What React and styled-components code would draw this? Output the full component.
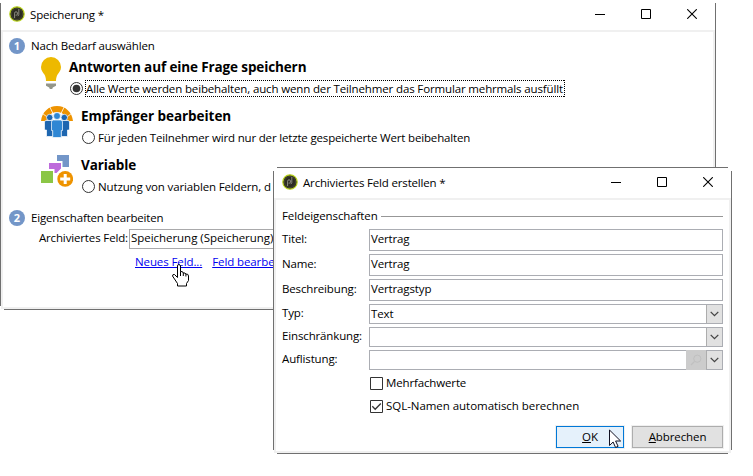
import React from 'react';
import styled, { createGlobalStyle, css } from 'styled-components';

const GlobalStyle = createGlobalStyle`
  * { box-sizing: border-box; }
  body {
    margin: 0;
    background: #fff;
    color: #000;
    font-family: "Open Sans", "Noto Sans", sans-serif;
    font-size: 11.5px;
    line-height: 17px;
    letter-spacing: -0.14px;
    overflow: hidden;
  }
`;

const Desktop = styled.main`
  position: relative;
  width: 753px;
  height: 476px;
  overflow: hidden;
`;

const WindowFrame = styled.section`
  position: absolute;
  left: ${(p) => p.$x}px;
  top: ${(p) => p.$y}px;
  width: ${(p) => p.$w}px;
  height: ${(p) => p.$h}px;
  padding: 1px;
  display: flex;
  flex-direction: column;

  &::before,
  &::after {
    content: '';
    position: absolute;
    pointer-events: none;
  }
  &::before {
    inset: 0 4px;
    border: solid #707070;
    border-width: 1px 0;
  }
  &::after {
    inset: 4px 0;
    border: solid #707070;
    border-width: 0 1px;
  }
`;

const TitleBar = styled.header`
  flex: none;
  height: 30px;
  display: flex;
  align-items: center;
  padding: 0 0 2px 8px;
  background: #fff;
`;

const TitleText = styled.h1`
  flex: 1;
  margin: 0 0 0 5px;
  padding-top: 1px;
  font-size: inherit;
  font-weight: 400;
  letter-spacing: -0.17px;
  white-space: pre;
`;

const CaptionButton = styled.button`
  width: 46px;
  height: 28px;
  padding: 0;
  border: 0;
  background: none;
  display: grid;
  place-items: center;
`;

const WindowBody = styled.div`
  flex: 1;
  min-height: 0;
  border: 2px solid #f0f0f0;
  background: #fff;
  padding: ${(p) => p.$pad};
  display: flex;
  flex-direction: column;
`;

const StepHeading = styled.h2`
  margin: 0;
  height: 17px;
  display: flex;
  align-items: center;
  gap: 6px;
  font-size: inherit;
  font-weight: 400;
  letter-spacing: -0.17px;
  white-space: nowrap;
`;

const OptionList = styled.div`
  margin: 3px 0 5px 32px;
`;

const Option = styled.div`
  height: 49px;
  display: flex;
  align-items: flex-start;
  gap: 8px;
`;

const OptionHeadline = styled.h3`
  margin: 0;
  height: 20px;
  line-height: 20px;
  font-size: 13.5px;
  font-weight: 700;
  letter-spacing: ${(p) => p.$track || '-0.12px'};
  white-space: nowrap;
`;

const RadioRow = styled.label`
  height: 23px;
  display: flex;
  align-items: center;
  gap: 2px;
  padding-left: 1px;
`;

const RadioText = styled.span`
  padding: 0 1px;
  letter-spacing: ${(p) => p.$track || '-0.17px'};
  white-space: nowrap;
  position: relative;
  ${(p) =>
    p.$focused &&
    css`
      width: 480px;
      height: 17px;
      line-height: 17px;

      &::after {
        content: '';
        position: absolute;
        inset: 0;
        --h: repeating-linear-gradient(90deg, #000 0 1px, transparent 1px 2px);
        --v: repeating-linear-gradient(0deg, #000 0 1px, transparent 1px 2px);
        background:
          var(--h) top / 100% 1px no-repeat,
          var(--h) bottom / 100% 1px no-repeat,
          var(--v) left / 1px 100% no-repeat,
          var(--v) right / 1px 100% no-repeat;
      }
    `}
`;

const ArchiveRow = styled.div`
  display: flex;
  margin: 3px 8px 0 0;
`;

const ArchiveLabel = styled.label`
  width: 120px;
  padding-right: 1px;
  text-align: right;
  letter-spacing: -0.14px;
`;

const ArchiveField = styled.div`
  flex: 1;
  height: 20px;
  border: 1px solid #a9a9ab;
  padding-left: 1px;
  line-height: 16px;
  letter-spacing: -0.04px;
`;

const LinkRow = styled.nav`
  display: flex;
  gap: 10px;
  margin: 4px 0 0 126px;
`;

const TextLink = styled.a`
  color: #0000f0;
  text-decoration: underline;
  text-underline-offset: 1px;
  letter-spacing: -0.1px;
  white-space: nowrap;
`;

const GroupTitle = styled.h2`
  margin: 0;
  display: flex;
  align-items: center;
  gap: 3px;
  height: 17px;
  font-size: inherit;
  font-weight: 400;
  letter-spacing: -0.1px;

  &::after {
    content: '';
    flex: 1;
    height: 1px;
    margin-top: 1px;
    background: #979797;
  }
`;

const Form = styled.div`
  margin-top: 5px;
  display: flex;
  flex-direction: column;
`;

const FormRow = styled.div`
  display: flex;
  height: ${(p) => (p.$combo ? 20 : 22)}px;
  margin-bottom: 3px;
`;

const FormLabel = styled.label`
  width: 87px;
  line-height: ${(p) => (p.$combo ? 17 : 19)}px;
  white-space: nowrap;
`;

const FormField = styled.div`
  flex: 1;
  display: flex;
  border: 1px solid #abadb3;
  line-height: 17px;
`;

const FieldValue = styled.span`
  flex: 1;
  padding-left: 1px;
`;

const DropButton = styled.button`
  width: 16px;
  padding: 0;
  border: 0;
  border-left: 1px solid #adadad;
  background: #e1e1e1;
  display: grid;
  place-items: center;
`;

const LookupButton = styled.button`
  width: 20px;
  height: 20px;
  margin: -1px 0;
  padding: 0;
  border: 0;
  background: #ccc;
  display: grid;
  place-items: center;
`;

const CheckRow = styled.label`
  display: flex;
  align-items: center;
  gap: 3px;
  height: 17px;
  margin: ${(p) => p.$top}px 0 0 88px;
  letter-spacing: ${(p) => p.$track};
  white-space: nowrap;

  svg {
    margin-top: 1px;
  }
`;

const Footer = styled.footer`
  margin-top: auto;
  display: flex;
  justify-content: flex-end;
  gap: 8px;
`;

const PushButton = styled.button`
  width: ${(p) => p.$w}px;
  height: 22px;
  padding: 0 0 1px;
  font: inherit;
  line-height: 19px;
  letter-spacing: -0.1px;
  color: #000;
  border: 1px solid ${(p) => (p.$primary ? '#0078d7' : '#adadad')};
  background: ${(p) => (p.$primary ? '#e5f1fb' : '#e1e1e1')};
  box-shadow: 0 0 0 1px #f0f0f0;

  u {
    text-underline-offset: 1px;
  }
`;

const Pointer = styled.svg`
  position: absolute;
  left: ${(p) => p.$x}px;
  top: ${(p) => p.$y}px;
`;

const AppIcon = () => (
  <svg width="16" height="16" viewBox="0 0 16 16">
    <circle cx="8" cy="8" r="7.2" fill="#2b2b22" stroke="#b9d31c" strokeWidth="1.2" />
    <circle cx="8" cy="8" r="5.6" fill="none" stroke="#45452f" />
    <path d="M5.6 12V7.2q0-1.400 1.400-1.400h.2q1.200 0 1.200 1.200v1.200q0 1-1.200 1H6.600M9.800 3v5.600q0 1.200-1.200 1.200" fill="none" stroke="#96968a" strokeWidth=".9" />
  </svg>
);

const Caption = ({ kind }) => (
  <CaptionButton aria-label={kind}>
    <svg width="10" height="10" viewBox="0 0 10 10" fill="none" stroke="#000">
      {kind === 'minimize' && <path d="M0 5.5h10" />}
      {kind === 'maximize' && <path d="M.5.5h9v9h-9z" />}
      {kind === 'close' && <path d="M.2.2l9.6 9.6M9.8.2L.2 9.8" strokeWidth="1.1" />}
    </svg>
  </CaptionButton>
);

const AppWindow = ({ title, pad, children, ...box }) => (
  <WindowFrame {...box}>
    <TitleBar>
      <AppIcon />
      <TitleText>{title}</TitleText>
      <Caption kind="minimize" />
      <Caption kind="maximize" />
      <Caption kind="close" />
    </TitleBar>
    <WindowBody $pad={pad}>{children}</WindowBody>
  </WindowFrame>
);

const Badge = styled.span`
  width: 16px;
  height: 16px;
  border-radius: 50%;
  background: #7396c8;
  color: #fff;
  font-size: 11px;
  font-weight: 700;
  line-height: 16px;
  text-align: center;
  letter-spacing: 0;
`;

const BulbIcon = () => (
  <svg width="20" height="33" viewBox="0 0 20 33">
    <path d="M10 0a10 10 0 0 1 10 10c0 3.6-2 5.400-3.400 7.600C15.600 19.300 15 21.500 15 24H5c0-2.500-.6-4.700-1.600-6.400C2 15.400 0 13.600 0 10A10 10 0 0 1 10 0z" fill="#edb900" />
    <path d="M5 26.600h10v2.200l-3.200 1.600-.6 1.600H8.800l-.6-1.600L5 28.800z" fill="#94968b" />
  </svg>
);

const PeopleIcon = () => (
  <svg width="32" height="32" viewBox="0 0 32 32">
    <path d="M0 15C1 6 7.500 0 16 0s15 6 16 15h-5.500c-1-5.500-5-9-10.500-9S6.500 9.500 5.500 15z" fill="#ee9300" />
    <path d="M8.600.5l3.400 7M23.400.5l-3.400 7M1.500 7.500l6 4.500M30.500 7.500l-6 4.500" stroke="#fff" strokeWidth=".8" />
    <g fill="#1e66b0" stroke="#fff" strokeWidth=".7">
      <circle cx="8.700" cy="11.500" r="3.200" />
      <circle cx="23.300" cy="11.500" r="3.200" />
      <path d="M3.500 16q0-1.500 1.500-1.500h7v16H5.500V24h-2zM28.500 16q0-1.500-1.500-1.500h-7v16h6.500V24h2z" />
    </g>
    <g fill="#2f87d4" stroke="#fff" strokeWidth=".7">
      <path d="M10.500 16q0-2 2-2h7q2 0 2 2v8.500H20.300v7h-8.600v-7h-1.200z" />
      <circle cx="16" cy="10" r="3.500" />
    </g>
  </svg>
);

const VariableIcon = () => (
  <svg width="32" height="32" viewBox="0 0 32 32">
    <path d="M16 0h12v12h-6.500V6H16z" fill="#7396c8" />
    <path d="M8 8h12v5.500l-4.500 4.500h-2v-4H8z" fill="#bd6bdc" />
    <path d="M0 16h12v12H0z" fill="#8bc646" />
    <circle cx="24.200" cy="23.900" r="8.500" fill="#fff" />
    <circle cx="24.200" cy="23.900" r="7.900" fill="#ee9300" />
    <path d="M24.200 18.900v10M19.200 23.900h10" stroke="#fff" strokeWidth="3" />
  </svg>
);

const Radio = ({ checked }) => (
  <svg width="13" height="13" viewBox="0 0 13 13">
    <circle cx="6.500" cy="6.500" r="6" fill="#fff" stroke="#333" />
    {checked && <circle cx="6.500" cy="6.500" r="3.800" fill="#333" />}
  </svg>
);

const Checkbox = ({ checked }) => (
  <svg width="13" height="13" viewBox="0 0 13 13" fill="none" stroke="#333">
    <path d="M.5.500h12v12H.5z" />
    {checked && <path d="M2.300 6.300l2.900 3 5.600-5.800" strokeWidth="1.300" />}
  </svg>
);

const Drop = () => (
  <DropButton aria-label="open">
    <svg width="9" height="6" viewBox="0 0 9 6" fill="none" stroke="#444" strokeWidth="1.300">
      <path d="M.7.900l3.800 3.800L8.300.900" />
    </svg>
  </DropButton>
);

const Lookup = () => (
  <LookupButton aria-label="lookup">
    <svg width="12" height="12" viewBox="0 0 12 12" fill="none" stroke="#c0c0c0">
      <circle cx="7.300" cy="4.700" r="3.600" />
      <path d="M4.600 7.400L1 11" strokeWidth="1.300" />
    </svg>
  </LookupButton>
);

const OptionItem = ({ icon, headline, track, text, textTrack, checked }) => (
  <Option>
    {icon}
    <div>
      <OptionHeadline $track={track}>{headline}</OptionHeadline>
      <RadioRow>
        <Radio checked={checked} />
        <RadioText $focused={checked} $track={textTrack}>{text}</RadioText>
      </RadioRow>
    </div>
  </Option>
);

const Field = ({ label, value, combo, lookup }) => (
  <FormRow $combo={combo}>
    <FormLabel $combo={combo}>{label}</FormLabel>
    <FormField>
      <FieldValue>{value}</FieldValue>
      {lookup && <Lookup />}
      {combo && <Drop />}
    </FormField>
  </FormRow>
);

export default function App() {
  return (
    <Desktop>
      <GlobalStyle />
      <AppWindow title="Speicherung *" pad="5px 0 0 6px" $x={0} $y={-1} $w={716} $h={311}>
        <StepHeading><Badge>1</Badge>Nach Bedarf auswählen</StepHeading>
        <OptionList>
          <OptionItem
            icon={<BulbIcon />}
            headline="Antworten auf eine Frage speichern"
            text="Alle Werte werden beibehalten, auch wenn der Teilnehmer das Formular mehrmals ausfüllt"
            textTrack="-0.14px"
            checked
          />
          <OptionItem
            icon={<PeopleIcon />}
            headline="Empfänger bearbeiten"
            track="-0.04px"
            text="Für jeden Teilnehmer wird nur der letzte gespeicherte Wert beibehalten"
          />
          <OptionItem
            icon={<VariableIcon />}
            headline="Variable"
            text="Nutzung von variablen Feldern, d"
            textTrack="-0.14px"
          />
        </OptionList>
        <StepHeading><Badge>2</Badge>Eigenschaften bearbeiten</StepHeading>
        <ArchiveRow>
          <ArchiveLabel>Archiviertes Feld:</ArchiveLabel>
          <ArchiveField>Speicherung (Speicherung)</ArchiveField>
        </ArchiveRow>
        <LinkRow>
          <TextLink>Neues Feld...</TextLink>
          <TextLink>Feld bearbe</TextLink>
        </LinkRow>
      </AppWindow>
      <AppWindow title="Archiviertes Feld erstellen *" pad="7px 6px 3px 6px" $x={273} $y={167} $w={459} $h={287}>
        <GroupTitle>Feldeigenschaften</GroupTitle>
        <Form>
          <Field label="Titel:" value="Vertrag" />
          <Field label="Name:" value="Vertrag" />
          <Field label="Beschreibung:" value="Vertragstyp" />
          <Field label="Typ:" value="Text" combo />
          <Field label="Einschränkung:" combo />
          <Field label="Auflistung:" combo lookup />
        </Form>
        <CheckRow $top={1} $track="-0.14px"><Checkbox />Mehrfachwerte</CheckRow>
        <CheckRow $top={6} $track="-0.04px"><Checkbox checked />SQL-Namen automatisch berechnen</CheckRow>
        <Footer>
          <PushButton $w={68} $primary><u>O</u>K</PushButton>
          <PushButton $w={91}><u>A</u>bbrechen</PushButton>
        </Footer>
      </AppWindow>
      <Pointer $x={172} $y={264} width="18" height="23" viewBox="0 0 18 23">
        <path
          d="M5.500 13.500V2q0-1.500 1.300-1.500T8.500 2v5.500q2.500-.5 2.700 1.500 2.300-.5 2.600 1 2.700-.3 2.700 2v4.500l-2 3v2.500h-9V19.500L2.500 15 .5 12q0-2 2-1.500l3 3zM8.500 7.500V12M11.300 8.800V12M13.900 10v2.500"
          fill="#fff"
          stroke="#000"
        />
      </Pointer>
      <Pointer $x={609} $y={429} width="13" height="20" viewBox="0 0 13 20">
        <path d="M.5 1v15.500l3.600-3.500 2.500 5.500 2.500-1.200-2.500-5.300h5L.5 1z" fill="#fff" stroke="#111122" />
      </Pointer>
    </Desktop>
  );
}
